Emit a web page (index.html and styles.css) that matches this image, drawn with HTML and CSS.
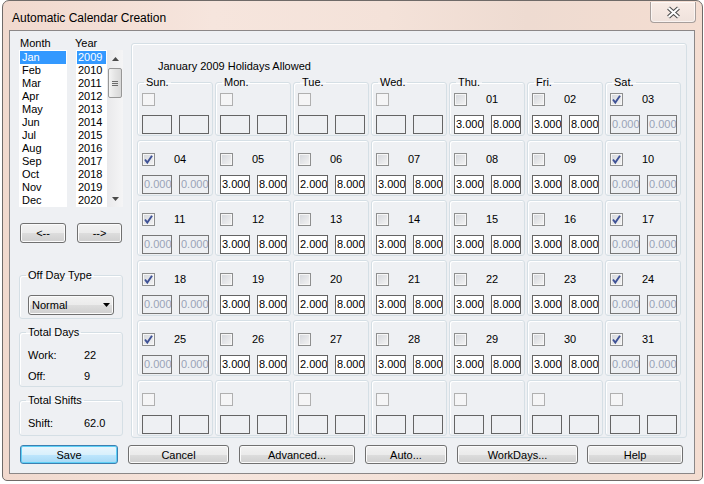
FILE: index.html
```html
<!DOCTYPE html>
<html lang="en">
<head>
    <meta charset="UTF-8">
    <meta name="viewport" content="width=device-width, initial-scale=1.0">
    <title>Automatic Calendar Creation</title>
    <link rel="stylesheet" href="styles.css">
</head>
<body>
    <div class="window">
        <div class="titlebar">
            <span class="title">Automatic Calendar Creation</span>
            <button class="close-btn">
                <svg width="15" height="13" viewBox="0 0 15 13">
                    <path d="M2.5 2 L12.5 11 M12.5 2 L2.5 11" stroke="#4e4e4e" stroke-width="4.2" fill="none"/>
                    <path d="M2.5 2 L12.5 11 M12.5 2 L2.5 11" stroke="#fff" stroke-width="2" fill="none"/>
                </svg>
            </button>
        </div>
        <div class="client">
            <div class="main">
                <div class="side">
                    <div class="list-labels"><span>Month</span><span>Year</span></div>
                    <div class="lists">
                        <ul class="listbox months">
                            <li class="selected">Jan</li>
                            <li>Feb</li>
                            <li>Mar</li>
                            <li>Apr</li>
                            <li>May</li>
                            <li>Jun</li>
                            <li>Jul</li>
                            <li>Aug</li>
                            <li>Sep</li>
                            <li>Oct</li>
                            <li>Nov</li>
                            <li>Dec</li>
                        </ul>
                        <div class="listbox years">
                            <ul>
                                <li class="selected">2009</li>
                                <li>2010</li>
                                <li>2011</li>
                                <li>2012</li>
                                <li>2013</li>
                                <li>2014</li>
                                <li>2015</li>
                                <li>2016</li>
                                <li>2017</li>
                                <li>2018</li>
                                <li>2019</li>
                                <li>2020</li>
                            </ul>
                            <div class="scrollbar">
                                <div class="scroll-btn">
                                    <svg width="7" height="4" viewBox="0 0 7 4"><polygon points="0,4 7,4 3.5,0" fill="#4a4a4a"/></svg>
                                </div>
                                <div class="thumb"><span></span><span></span><span></span></div>
                                <div class="scroll-track"></div>
                                <div class="scroll-btn">
                                    <svg width="7" height="4" viewBox="0 0 7 4"><polygon points="0,0 7,0 3.5,4" fill="#4a4a4a"/></svg>
                                </div>
                            </div>
                        </div>
                    </div>
                    <div class="nav">
                        <button class="btn nav-prev">&lt;--</button>
                        <button class="btn nav-next">--&gt;</button>
                    </div>
                    <fieldset class="group offday">
                        <legend>Off Day Type</legend>
                        <div class="combo">
                            <span>Normal</span>
                            <svg width="7" height="4" viewBox="0 0 7 4"><polygon points="0,0 7,0 3.5,4" fill="#000"/></svg>
                        </div>
                    </fieldset>
                    <fieldset class="group totals">
                        <legend>Total Days</legend>
                        <div class="stat first-stat"><span>Work:</span><span>22</span></div>
                        <div class="stat"><span>Off:</span><span>9</span></div>
                    </fieldset>
                    <fieldset class="group shifts">
                        <legend>Total Shifts</legend>
                        <div class="stat first-stat"><span>Shift:</span><span>62.0</span></div>
                    </fieldset>
                </div>
                <fieldset class="calendar">
                    <div class="cal-title">January 2009 Holidays Allowed</div>
                    <div class="cal-grid" id="calGrid"></div>
                </fieldset>
            </div>
            <div class="buttons">
                <button class="btn default w-save">Save</button>
                <button class="btn w-cancel">Cancel</button>
                <button class="btn w-advanced">Advanced...</button>
                <button class="btn w-auto">Auto...</button>
                <button class="btn w-workdays">WorkDays...</button>
                <button class="btn w-help">Help</button>
            </div>
        </div>
    </div>

    <script>
        const dayNames = ['Sun.', 'Mon.', 'Tue.', 'Wed.', 'Thu.', 'Fri.', 'Sat.'];
        const firstDay = 4; // Jan 1 2009 is a Thursday
        const daysInMonth = 31;
        const check = '<svg width="11" height="11" viewBox="0 0 11 11"><path d="M2 5.5 L4.3 8.6 L9 1.8" stroke="#3f5296" stroke-width="1.9" fill="none"/></svg>';

        const grid = document.getElementById('calGrid');

        for (let i = 0; i < 42; i++) {
            const col = i % 7;
            const day = i - firstDay + 1;
            const cell = document.createElement('fieldset');
            cell.className = 'cell' + (i < 7 ? ' first' : '');

            let html = i < 7 ? `<legend>${dayNames[col]}</legend>` : '';

            if (day < 1 || day > daysInMonth) {
                html += '<div class="cell-head"><span class="cb cb-disabled"></span></div>';
                html += '<div class="cell-fields"><span class="tb"></span><span class="tb"></span></div>';
            } else {
                const weekend = col === 0 || col === 6;
                const num = String(day).padStart(2, '0');
                html += `<div class="cell-head"><span class="cb">${weekend ? check : ''}</span><span class="day-num">${num}</span></div>`;
                if (weekend) {
                    html += '<div class="cell-fields"><span class="tb tb-disabled">0.000</span><span class="tb tb-disabled">0.000</span></div>';
                } else {
                    const hours = col === 2 ? '2.000' : '3.000';
                    html += `<div class="cell-fields"><span class="tb tb-value">${hours}</span><span class="tb tb-value">8.000</span></div>`;
                }
            }

            cell.innerHTML = html;
            grid.appendChild(cell);
        }
    </script>
</body>
</html>
```

FILE: styles.css
```css
body {
    margin: 0;
    background: #fff;
    font-family: "Liberation Sans", Arial, sans-serif;
    font-size: 11px;
    color: #000;
}
.window {
    margin-left: 2px;
    width: 701px;
    height: 481px;
    box-sizing: border-box;
    border: 1px solid #6f6a68;
    border-radius: 7px 7px 5px 5px;
    background: linear-gradient(90deg, #f1d9ce 0%, #f6e5dd 30%, #f4e2d9 55%, #eedbd1 75%, #f4ddd1 100%);
}
.titlebar {
    display: flex;
    justify-content: space-between;
    height: 29px;
}
.title {
    padding: 10px 0 0 9px;
    font-size: 12px;
    line-height: 15px;
}
.close-btn {
    width: 46px;
    height: 21px;
    margin: 1px 6px 0 0;
    padding: 0;
    display: flex;
    align-items: center;
    justify-content: center;
    border: 1px solid #a79e9b;
    border-top: none;
    border-radius: 0 0 4px 4px;
    background: linear-gradient(#f8ece6, #efe2dc);
    box-shadow: inset 0 0 0 1px rgba(255,255,255,0.6);
}
.client {
    margin-left: 6px;
    width: 686px;
    height: 444px;
    box-sizing: border-box;
    border: 1px solid #8b8787;
    background: #eef0f3;
}
.main {
    display: flex;
    height: 407px;
}
.side {
    width: 121px;
    flex-shrink: 0;
    box-sizing: border-box;
    padding: 6px 0 0 9px;
}
.list-labels {
    display: flex;
    height: 13px;
    line-height: 13px;
}
.list-labels span:first-child {
    width: 55px;
    padding-left: 1px;
}
.lists {
    display: flex;
    gap: 9px;
    height: 157px;
}
.listbox {
    background: #fff;
}
ul.listbox, .listbox ul {
    list-style: none;
    margin: 0;
    padding: 1px 0 0 0;
}
.listbox li {
    height: 13px;
    line-height: 13px;
    margin: 0 1px;
    padding-left: 2px;
}
.listbox li.selected {
    background: #3399ff;
    color: #fff;
}
.months {
    width: 48px;
}
.years {
    width: 47px;
    display: flex;
}
.years ul {
    width: 31px;
}
.years li {
    padding-left: 1px;
}
.scrollbar {
    width: 16px;
    display: flex;
    flex-direction: column;
    background: linear-gradient(90deg, #e9e9eb, #f5f5f6);
}
.scroll-btn {
    height: 17px;
    display: flex;
    align-items: center;
    justify-content: center;
}
.thumb {
    height: 30px;
    margin: 1px 1px 0 1px;
    box-sizing: border-box;
    border: 1px solid #979797;
    border-radius: 2px;
    background: linear-gradient(90deg, #f4f4f4, #e4e4e4 50%, #d8d8d8);
    display: flex;
    flex-direction: column;
    align-items: center;
    justify-content: center;
    gap: 1px;
}
.thumb span {
    width: 6px;
    height: 1px;
    background: #6c6c6c;
}
.scroll-track {
    flex: 1;
}
.btn {
    padding: 0;
    font: inherit;
    color: #000;
    border: 1px solid #707070;
    border-radius: 3px;
    background: linear-gradient(#f2f2f2 0%, #ebebeb 50%, #dddddd 51%, #cfcfcf 100%);
    box-shadow: inset 0 0 0 1px #fbfbfb;
}
.btn.default {
    border-color: #3c7fb1;
    background: linear-gradient(#eaf6fd 0%, #d9f0fc 50%, #bee6fd 51%, #a7d9f5 100%);
    box-shadow: inset 0 0 0 1px #5fd0f6;
}
.nav {
    display: flex;
    gap: 11px;
    margin-top: 16px;
    padding-left: 1px;
}
.nav .btn {
    height: 20px;
}
.nav-prev {
    width: 46px;
}
.nav-next {
    width: 45px;
}
.group {
    width: 104px;
    margin: 7px 0 0 0;
    padding: 0;
    min-width: 0;
    box-sizing: border-box;
    border: 1px solid #d5dfe5;
    border-radius: 3px;
    box-shadow: inset 1px 1px 0 #fff;
}
legend {
    font-weight: normal;
    padding: 0 2px;
    line-height: 13px;
}
.group legend {
    margin-left: 6px;
}
.cell legend {
    margin-left: 2px;
}
.offday {
    margin-top: 26px;
    padding-bottom: 3px;
}
.combo {
    margin: 13px 0 0 8px;
    width: 86px;
    height: 20px;
    box-sizing: border-box;
    padding: 0 3px;
    display: flex;
    align-items: center;
    justify-content: space-between;
    border: 1px solid #707070;
    border-radius: 3px;
    background: linear-gradient(#f2f2f2 0%, #ebebeb 50%, #dddddd 51%, #cfcfcf 100%);
    box-shadow: inset 0 0 0 1px #fbfbfb;
}
.totals {
    padding-bottom: 3px;
}
.shifts {
    padding-bottom: 5px;
}
.stat {
    display: flex;
    line-height: 13px;
    padding-left: 8px;
    margin-top: 8px;
}
.stat.first-stat {
    margin-top: 10px;
}
.stat span:first-child {
    width: 56px;
}
.calendar {
    margin: 12px 0 0 0;
    width: 556px;
    height: 395px;
    box-sizing: border-box;
    padding: 16px 0 0 5px;
    min-width: 0;
    border: 1px solid #d5dfe5;
    border-radius: 3px;
    box-shadow: inset 1px 1px 0 #fff;
}
.cal-title {
    line-height: 13px;
    padding-left: 21px;
}
.cal-grid {
    margin-top: 3px;
    display: grid;
    grid-template-columns: repeat(7, 76px);
    grid-template-rows: 60px repeat(5, 56px);
    column-gap: 2px;
    row-gap: 4px;
}
.cell {
    margin: 0;
    padding: 12px 0 0 4px;
    min-width: 0;
    box-sizing: border-box;
    border: 1px solid #d5dfe5;
    border-radius: 3px;
    box-shadow: inset 1px 1px 0 #fff;
}
.cell.first {
    padding-top: 4px;
}
.cell-head {
    display: flex;
    align-items: center;
    height: 13px;
}
.day-num {
    margin-left: 19px;
    line-height: 13px;
}
.cb {
    width: 13px;
    height: 13px;
    box-sizing: border-box;
    border: 1px solid #8e8f8f;
    background: linear-gradient(135deg, #d3d6db, #f4f4f4);
    box-shadow: inset 0 0 0 1px #f6f6f6;
}
.cb svg {
    display: block;
}
.cb-disabled {
    border-color: #b0b0b0;
    background: #f5f5f6;
    box-shadow: none;
}
.cell-fields {
    display: flex;
    gap: 7px;
    margin-top: 9px;
}
.tb {
    width: 30px;
    height: 19px;
    box-sizing: border-box;
    border: 1px solid #646464;
    padding-left: 1px;
    line-height: 17px;
    white-space: nowrap;
    overflow: hidden;
}
.tb-value {
    background: #fff;
}
.tb-disabled {
    border-color: #777;
    color: #9aa4b8;
}
.buttons {
    display: flex;
    gap: 10px;
    padding: 7px 0 0 10px;
}
.buttons .btn {
    height: 19px;
}
.w-save {
    width: 98px;
}
.w-cancel {
    width: 101px;
}
.w-advanced {
    width: 116px;
}
.w-auto {
    width: 82px;
}
.w-workdays {
    width: 121px;
}
.w-help {
    width: 96px;
    margin-left: -1px;
}
```
